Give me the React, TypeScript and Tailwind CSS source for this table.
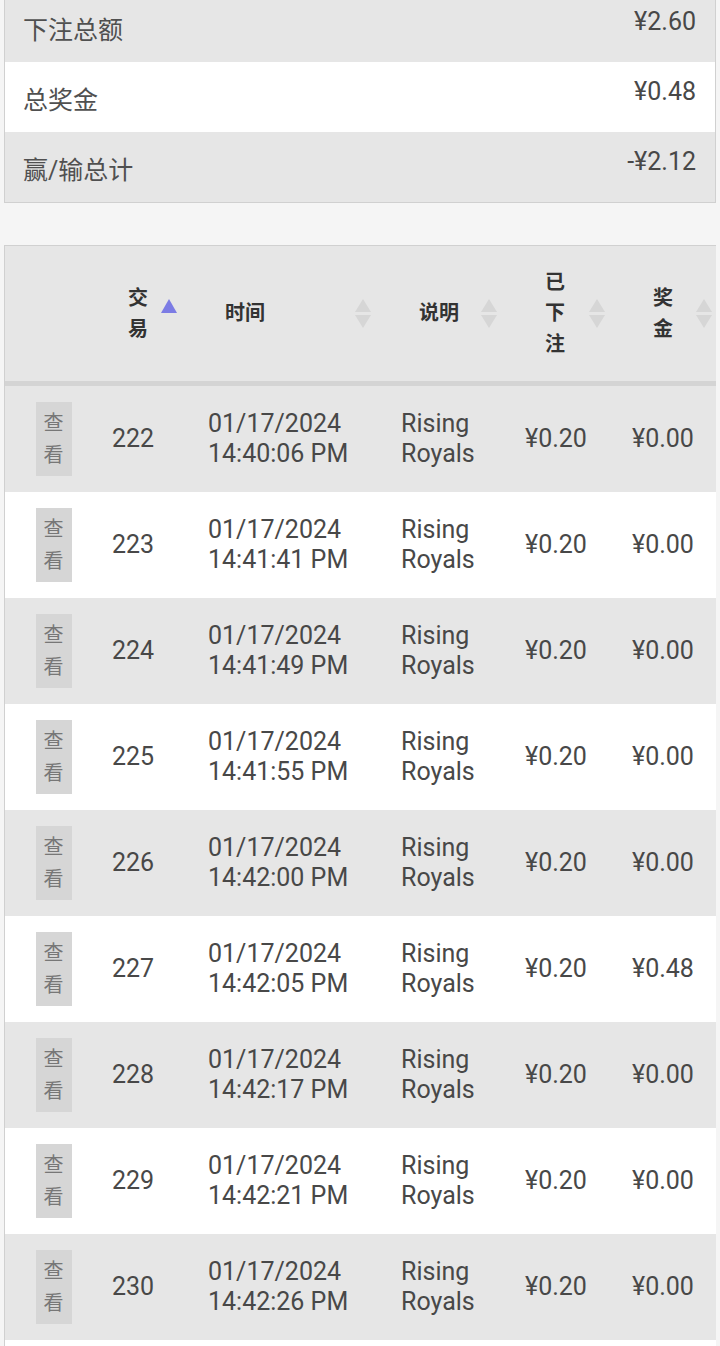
import React from 'react';

const SUMMARY = [
  { label: '下注总额', value: '¥2.60', bg: 'bg-[#e6e6e6]' },
  { label: '总奖金', value: '¥0.48', bg: 'bg-white' },
  { label: '赢/输总计', value: '-¥2.12', bg: 'bg-[#e6e6e6]' },
];

const ROWS = [
  { id: 222, time: '14:40:06 PM', win: '¥0.00' },
  { id: 223, time: '14:41:41 PM', win: '¥0.00' },
  { id: 224, time: '14:41:49 PM', win: '¥0.00' },
  { id: 225, time: '14:41:55 PM', win: '¥0.00' },
  { id: 226, time: '14:42:00 PM', win: '¥0.00' },
  { id: 227, time: '14:42:05 PM', win: '¥0.48' },
  { id: 228, time: '14:42:17 PM', win: '¥0.00' },
  { id: 229, time: '14:42:21 PM', win: '¥0.00' },
  { id: 230, time: '14:42:26 PM', win: '¥0.00' },
];

const GRID = 'grid grid-cols-[97px_96px_193px_124px_107px_110px] w-[727px]';

function SortIcon({ active }: { active?: boolean }) {
  return (
    <svg width="16" height="30" viewBox="0 0 16 30" className="shrink-0">
      {active ? (
        <polygon points="8,0 16,14 0,14" fill="#7c7ce4" />
      ) : (
        <>
          <polygon points="8,0 16,13 0,13" fill="#d6d6d6" />
          <polygon points="0,16 16,16 8,29" fill="#d6d6d6" />
        </>
      )}
    </svg>
  );
}

function HeadCell({ lines, pl, pr, active }: { lines: string[]; pl: string; pr: string; active?: boolean }) {
  return (
    <div className={`flex items-center justify-between ${pl} ${pr}`}>
      <div className="text-[20px] font-bold leading-[31px] text-[#333]">
        {lines.map((l) => (
          <div key={l}>{l}</div>
        ))}
      </div>
      <SortIcon active={active} />
    </div>
  );
}

export default function App() {
  return (
    <div className="min-h-screen overflow-hidden bg-[#f5f5f5] font-[Roboto,'Noto_Sans_CJK_SC',sans-serif] text-[#484848]">
      {/* Summary */}
      <div className="mx-[4px] mt-[-9px] border border-[#d0d0d0]">
        {SUMMARY.map((s) => (
          <div key={s.label} className={`flex h-[70px] items-start justify-between pl-[18px] pr-[19px] text-[25px] leading-[30px] ${s.bg}`}>
            <span className="pt-[24px] text-[#505050]">{s.label}</span>
            <span className="pt-[15px]">{s.value}</span>
          </div>
        ))}
      </div>

      {/* Table */}
      <div className="mt-[42px] ml-[4px] mr-[4px] overflow-hidden border-l border-t border-[#d0d0d0]">
        <div className={`${GRID} h-[140px] border-b-[5px] border-[#d4d4d4] bg-[#e6e6e6]`}>
          <div />
          <HeadCell lines={['交', '易']} pl="pl-[26px]" pr="pr-[21px]" active />
          <HeadCell lines={['时间']} pl="pl-[27px]" pr="pr-[20px]" />
          <HeadCell lines={['说明']} pl="pl-[28px]" pr="pr-[18px]" />
          <HeadCell lines={['已', '下', '注']} pl="pl-[30px]" pr="pr-[17px]" />
          <HeadCell lines={['奖', '金']} pl="pl-[31px]" pr="pr-[20px]" />
        </div>

        {ROWS.map((r, i) => (
          <div
            key={r.id}
            className={`${GRID} h-[106px] items-center text-[25px] leading-[30px] ${i % 2 === 0 ? 'bg-[#e6e6e6]' : 'bg-white'}`}
          >
            <div className="flex justify-center">
              <button className="w-[36px] bg-[#d6d6d6] py-[5px] text-[20px] leading-[32px] text-[#777]">
                <div>查</div>
                <div>看</div>
              </button>
            </div>
            <div className="pl-[10px]">{r.id}</div>
            <div className="pl-[10px]">
              <div>01/17/2024</div>
              <div>{r.time}</div>
            </div>
            <div className="pl-[10px]">
              <div>Rising</div>
              <div>Royals</div>
            </div>
            <div className="pl-[10px]">¥0.20</div>
            <div className="pl-[10px]">{r.win}</div>
          </div>
        ))}
        <div className="h-[20px] bg-white" />
      </div>
    </div>
  );
}
